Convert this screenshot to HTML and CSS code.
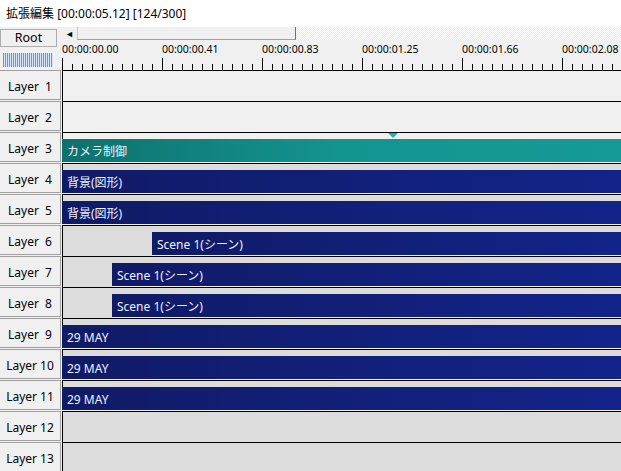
FILE: index.html
```html
<!DOCTYPE html>
<html lang="ja">
<head>
<meta charset="utf-8">
<title>拡張編集</title>
<link rel="stylesheet" href="styles.css">
</head>
<body>
<div class="title"><span class="jp">拡張編集</span><span class="num"> [00:00:05.12] [124/300]</span></div>
<div class="top">
  <div class="side">
    <div class="root">Root</div>
    <div class="hatch"></div>
  </div>
  <div class="timehead">
    <div class="scroll">
      <div class="arrow">&#9668;</div>
      <div class="thumb"></div>
      <div class="sfill"></div>
    </div>
    <div class="labels">
      <span>00:00:00.00</span><span>00:00:00.41</span><span>00:00:00.83</span><span>00:00:01.25</span><span>00:00:01.66</span><span>00:00:02.08</span>
    </div>
    <div class="ticks"></div>
  </div>
</div>
<div class="rows">
  <div class="row"><div class="hd"><div class="lbl">Layer  1</div></div><div class="trk lt"></div></div>
  <div class="row"><div class="hd"><div class="lbl">Layer  2</div></div><div class="trk lt"></div></div>
  <div class="row"><div class="hd"><div class="lbl">Layer  3</div></div><div class="trk lt"><div class="mark"></div><div class="bar teal">カメラ制御</div></div></div>
  <div class="row"><div class="hd"><div class="lbl">Layer  4</div></div><div class="trk dk"><div class="bar navy">背景(図形)</div></div></div>
  <div class="row"><div class="hd"><div class="lbl">Layer  5</div></div><div class="trk dk"><div class="bar navy">背景(図形)</div></div></div>
  <div class="row"><div class="hd"><div class="lbl">Layer  6</div></div><div class="trk dk"><div class="bar navy" style="margin-left:90px">Scene 1(シーン)</div></div></div>
  <div class="row"><div class="hd"><div class="lbl">Layer  7</div></div><div class="trk dk"><div class="bar navy" style="margin-left:50px">Scene 1(シーン)</div></div></div>
  <div class="row"><div class="hd"><div class="lbl">Layer  8</div></div><div class="trk dk"><div class="bar navy" style="margin-left:50px">Scene 1(シーン)</div></div></div>
  <div class="row"><div class="hd"><div class="lbl">Layer  9</div></div><div class="trk dk"><div class="bar navy">29 MAY</div></div></div>
  <div class="row"><div class="hd"><div class="lbl">Layer 10</div></div><div class="trk dk"><div class="bar navy">29 MAY</div></div></div>
  <div class="row"><div class="hd"><div class="lbl">Layer 11</div></div><div class="trk dk"><div class="bar navy">29 MAY</div></div></div>
  <div class="row"><div class="hd"><div class="lbl">Layer 12</div></div><div class="trk dk"></div></div>
  <div class="row"><div class="hd"><div class="lbl">Layer 13</div></div><div class="trk dk"></div></div>
</div>
</body>
</html>
```

FILE: styles.css
```css
* { box-sizing: border-box; margin: 0; padding: 0; }
html, body { width: 621px; height: 471px; overflow: hidden; }
body {
  font-family: "Noto Sans", "Noto Sans CJK JP", sans-serif;
  font-size: 12px;
  color: #000;
  background: #f0f0f0;
}
.title {
  height: 27px;
  background: #fff;
  padding-left: 6px;
  line-height: 27px;
  white-space: nowrap;
}
.title .jp { font-size: 12px; }
.title .num { font-size: 12px; }

.top { display: flex; height: 43px; }
.side { width: 62px; padding-top: 2px; }
.root {
  width: 57px;
  height: 18px;
  border: 1px solid #adadad;
  background: #f0f0f0;
  text-align: center;
  line-height: 16px;
  font-size: 12.5px;
}
.hatch {
  margin: 6px 0 0 3px;
  width: 50px;
  height: 14px;
  background: repeating-linear-gradient(90deg, #5b9be0 0 1px, #d8e6f6 1px 2px);
}
.timehead {
  width: 559px;
  display: flex;
  flex-direction: column;
  overflow: hidden;
}
.scroll { height: 13px; display: flex; flex: none; }
.arrow {
  width: 15px;
  background: #f0f0f0;
  font-size: 9px;
  line-height: 13px;
  padding-left: 3px;
  color: #000;
}
.thumb {
  width: 219px;
  background: #f0f0f0;
  border-left: 1px solid #c8c8c8;
  border-right: 1px solid #707070;
  border-bottom: 1px solid #a0a0a0;
}
.sfill {
  flex: 1;
  background: repeating-conic-gradient(#ffffff 0 25%, #ebebeb 0 50%) 0 0 / 2px 2px;
}
.labels {
  display: flex;
  margin-top: 2px;
  height: 14px;
  line-height: 14px;
  font-size: 10.5px;
  white-space: nowrap;
  flex: none;
}
.labels span { width: 100px; flex: none; }
.ticks {
  margin-top: 2px;
  height: 12px;
  flex: none;
  background:
    repeating-linear-gradient(90deg, #000 0 1px, transparent 1px 100px) 0 0 / 100% 12px no-repeat,
    repeating-linear-gradient(90deg, #000 0 1px, transparent 1px 10px) 0 100% / 100% 6px no-repeat;
}

.row { display: flex; height: 31px; }
.hd { width: 62px; height: 31px; padding-bottom: 1px; }
.lbl {
  width: 61px;
  height: 30px;
  border: 1px solid #a0a0a0;
  border-left: none;
  padding-top: 3px;
  display: flex;
  align-items: center;
  justify-content: center;
  white-space: pre;
}
.trk {
  flex: 1;
  height: 31px;
  border-top: 1px solid #000;
  box-shadow: inset 1px 0 #000;
  padding-top: 6px;
  display: flex;
  align-items: flex-start;
  position: relative;
}
.trk.lt { background: #f0f0f0; }
.trk.dk { background: #dcdcdc; }
.bar {
  flex: 1;
  height: 24px;
  border-bottom: 1px solid #f0f0f0;
  padding: 2px 0 0 5px;
  line-height: 22px;
  color: #eef0ff;
  white-space: nowrap;
  overflow: hidden;
}
.bar.teal { background: linear-gradient(90deg, #0e716d, #149490 50%, #169a97); }
.bar.navy { background: linear-gradient(90deg, #101b66, #12248a); }
.mark {
  position: absolute;
  left: 326px;
  top: 0;
  width: 0;
  height: 0;
  border-left: 5px solid transparent;
  border-right: 5px solid transparent;
  border-top: 5px solid #1cb5ad;
}
```
